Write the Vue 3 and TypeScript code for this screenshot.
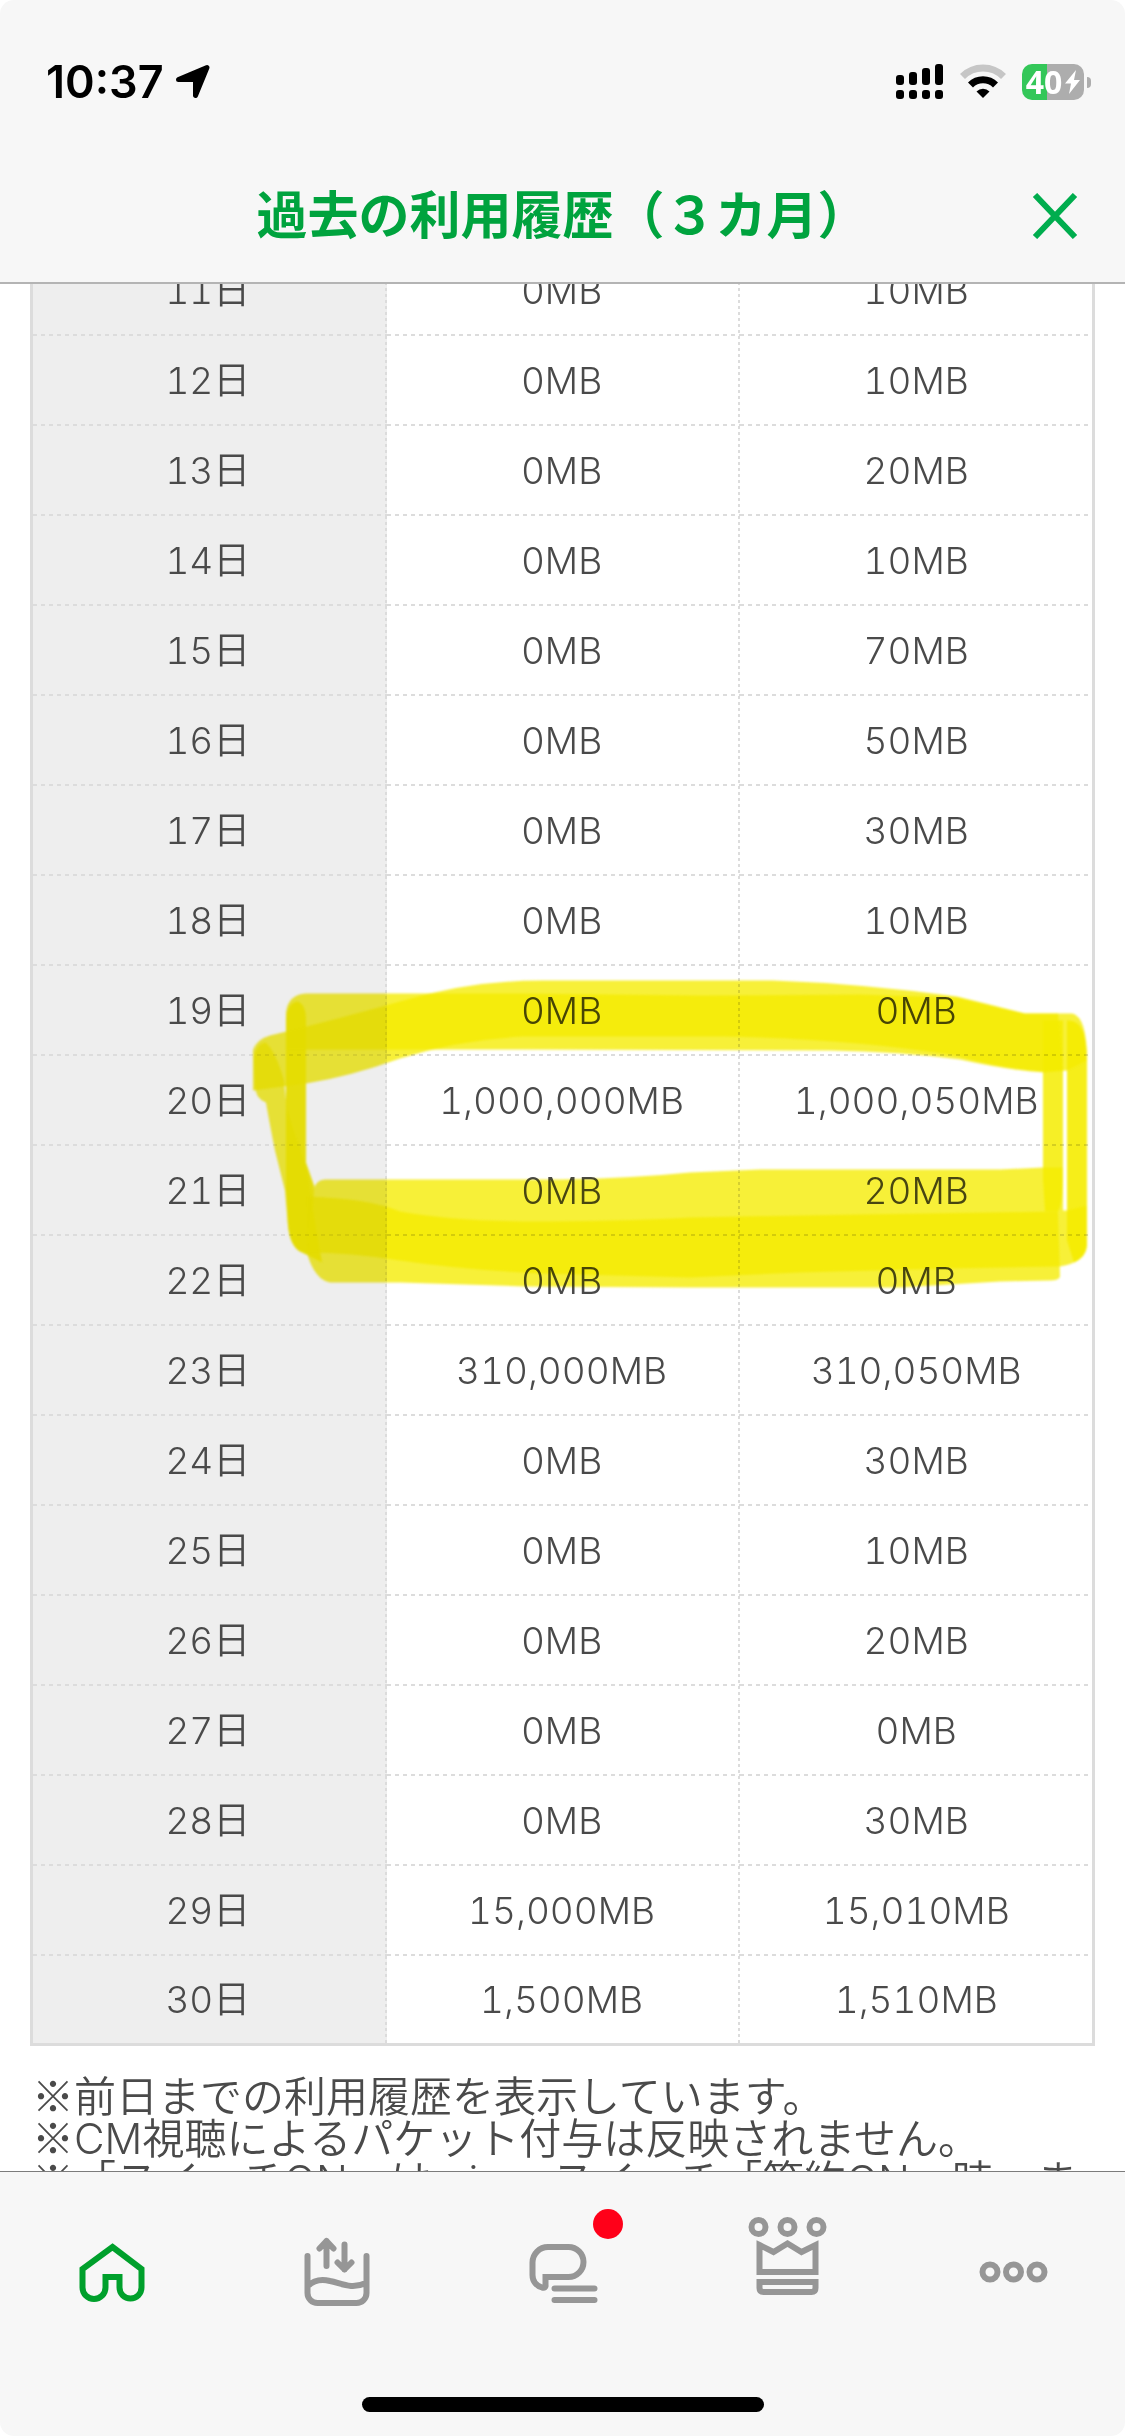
<script setup lang="ts">
import { onMounted, ref } from 'vue'

interface UsageRow {
  day: string
  granted: string
  used: string
}

const rows: UsageRow[] = [
  { day: '11日', granted: '0MB', used: '10MB' },
  { day: '12日', granted: '0MB', used: '10MB' },
  { day: '13日', granted: '0MB', used: '20MB' },
  { day: '14日', granted: '0MB', used: '10MB' },
  { day: '15日', granted: '0MB', used: '70MB' },
  { day: '16日', granted: '0MB', used: '50MB' },
  { day: '17日', granted: '0MB', used: '30MB' },
  { day: '18日', granted: '0MB', used: '10MB' },
  { day: '19日', granted: '0MB', used: '0MB' },
  { day: '20日', granted: '1,000,000MB', used: '1,000,050MB' },
  { day: '21日', granted: '0MB', used: '20MB' },
  { day: '22日', granted: '0MB', used: '0MB' },
  { day: '23日', granted: '310,000MB', used: '310,050MB' },
  { day: '24日', granted: '0MB', used: '30MB' },
  { day: '25日', granted: '0MB', used: '10MB' },
  { day: '26日', granted: '0MB', used: '20MB' },
  { day: '27日', granted: '0MB', used: '0MB' },
  { day: '28日', granted: '0MB', used: '30MB' },
  { day: '29日', granted: '15,000MB', used: '15,010MB' },
  { day: '30日', granted: '1,500MB', used: '1,510MB' },
]

const notes: string[] = [
  '前日までの利用履歴を表示しています。',
  'CM視聴によるパケット付与は反映されません。',
  '「スイッチON」はmineoスイッチ「節約ON」時、ま',
]

const scroller = ref<HTMLElement | null>(null)

// The list opens part-way through the row of the 11th.
onMounted(() => {
  if (scroller.value) scroller.value.scrollTop = 38
})
</script>

<template>
  <div class="screen">
    <div class="status">
      <div class="status-left">
        <span class="clock">10:37</span>
        <svg class="location" width="36" height="36" viewBox="0 0 36 36">
          <path d="M2.500 15.500 31 3.500 19.500 31.500V15.500Z" fill="#000" stroke="#000" stroke-width="5" stroke-linejoin="round" />
        </svg>
      </div>
      <div class="status-right">
        <svg width="48" height="36" viewBox="0 0 48 36">
          <rect x="0" y="11" width="8" height="10" rx="3" />
          <rect x="13" y="8" width="8" height="13" rx="3" />
          <rect x="26" y="4" width="8" height="17" rx="3" />
          <rect x="39" y="0" width="8" height="21" rx="3" />
          <rect x="0" y="26" width="8" height="9" rx="3" />
          <rect x="13" y="26" width="8" height="9" rx="3" />
          <rect x="26" y="26" width="8" height="9" rx="3" />
          <rect x="39" y="26" width="8" height="9" rx="3" />
        </svg>
        <svg width="46" height="36" viewBox="0 0 46 36" fill="none">
          <path d="M2.500 12.500A29 29 0 0 1 43.500 12.500" stroke="#c6c6c6" stroke-width="7" />
          <path d="M10.500 21A17.500 17.500 0 0 1 35.500 21" stroke="#000" stroke-width="7" />
          <path d="M23 34 16.500 27.500a9.200 9.200 0 0 1 13 0Z" fill="#000" />
        </svg>
        <div class="battery-wrap">
          <div class="battery">
            <span>40</span>
            <svg width="15" height="24" viewBox="0 0 15 24">
              <path d="M11 0 0 13.500h6L4 24 15 10H9Z" fill="#fff" />
            </svg>
          </div>
          <div class="battery-nub"></div>
        </div>
      </div>
    </div>

    <header class="header">
      <h1>過去の利用履歴（３カ月）</h1>
      <button class="close" type="button" aria-label="閉じる">
        <svg width="46" height="46" viewBox="0 0 46 46">
          <path d="M3 2 43 44M43 2 3 44" stroke="#00ad4e" stroke-width="6" />
        </svg>
      </button>
    </header>

    <main ref="scroller" class="content">
      <div class="history">
        <table>
          <tbody>
            <tr v-for="row in rows" :key="row.day">
              <th scope="row">{{ row.day }}</th>
              <td>{{ row.granted }}</td>
              <td>{{ row.used }}</td>
            </tr>
          </tbody>
        </table>
        <svg class="marker" viewBox="30 245 1065 1801" preserveAspectRatio="none" aria-hidden="true">
          <g fill="#f5ec00">
            <path opacity="0.78" d="M286 1012Q288 994 306 993H523L700 995 860 994 957 997Q1000 1008 1025 1013H1072Q1087 1016 1087 1060L1067 1070 1044 1072Q1010 1070 960 1059 900 1051 830 1050L520 1049H286Z" />
            <path opacity="0.78" d="M253 1050Q256 1039 270 1035 340 1018 400 1001 470 980 540 980H773Q860 983 957 996 990 1004 1025 1013H1058L1063 1070 1044 1071Q1000 1068 955 1055 850 1038 723 1036H523Q460 1039 400 1058 350 1076 306 1083L253 1090Z" />
            <path opacity="0.95" d="M286 1020Q287 1003 297 1001 306 1003 306 1020V1162L314 1185 313 1210 322 1262 300 1251Q290 1245 288 1225L286 1190Z" />
            <path opacity="0.78" d="M254 1055Q258 1042 266 1042 276 1052 284 1080L287 1110 306 1165 312 1200 318 1250 300 1251Q290 1245 288 1225L285 1190 275 1150Q269 1120 266 1102 255 1098 255 1085Z" />
            <path opacity="0.78" d="M313 1190Q316 1179 325 1179H560Q630 1178 690 1172L760 1169H1000L1043 1167H1063V1210H1067L1087 1205V1245Q1085 1262 1060 1266L950 1268 800 1272 690 1277 540 1273Q460 1269 400 1260 350 1252 306 1252Z" />
            <path opacity="0.78" d="M306 1196Q370 1198 400 1211 450 1220 523 1221 620 1221 690 1217L860 1214 1058 1211 1060 1276Q1059 1280 1050 1280L1000 1281 900 1287H690L523 1286 400 1282H330Q316 1280 308 1256Z" />
            <path opacity="0.85" d="M1043 1020H1063V1180Q1062 1205 1058 1211H1045L1043 1180Z" />
            <path opacity="0.9" d="M1067 1020Q1087 1018 1087 1060V1245Q1086 1257 1074 1262L1067 1240Z" />
          </g>
        </svg>
      </div>
      <div class="notes">
        <p v-for="note in notes" :key="note"><span class="mark">※</span>{{ note }}</p>
      </div>
    </main>

    <nav class="tabs" aria-label="メインメニュー">
      <div class="tab-row">
        <button class="tab active" type="button" aria-label="ホーム">
          <svg viewBox="0 0 90 100">
            <path stroke-width="6" d="M44.500 37 73.500 59V77.500a11 11 0 0 1-22 0V67h-14V77.500a11 11 0 0 1-23 0V59Z" />
          </svg>
        </button>
        <button class="tab" type="button" aria-label="データ">
          <svg viewBox="0 0 90 100" stroke-linecap="round" stroke-linejoin="round">
            <path stroke-width="6" d="M14.500 46V83a10 10 0 0 0 10 10H63.500a10 10 0 0 0 10-10V46M15 76C21 70 29 69 37 71 48 73 58 80 73 73M33.500 56V31M26.500 38.500l7-7.500 7 7.500M51.500 34.500V59.500M44.500 52.500l7 7 7-7" />
          </svg>
        </button>
        <button class="tab" type="button" aria-label="お知らせ">
          <svg viewBox="0 0 90 100" stroke-linecap="round">
            <path stroke-width="6" d="M27.500 67H50.500a15 15 0 0 0 0-30H30a15.500 15.500 0 0 0-15.500 15.500V65c0 7 4.500 11 9.500 12.500q4 1 3.500-2.500ZM36.500 78.500h40M36.500 90h40" />
          </svg>
          <span class="badge"></span>
        </button>
        <button class="tab" type="button" aria-label="特典">
          <svg viewBox="0 0 90 100">
            <g stroke-width="6">
              <circle cx="15.500" cy="17" r="7" />
              <circle cx="44.500" cy="17" r="7" />
              <circle cx="73.500" cy="17" r="7" />
              <path d="M16.500 35 30.500 42 44.500 33.500 58.500 42 72.500 35V62h-56ZM16.500 72h56v6q0 4-4 4h-48q-4 0-4-4Z" />
            </g>
          </svg>
        </button>
        <button class="tab" type="button" aria-label="その他">
          <svg viewBox="0 0 90 100">
            <g stroke-width="6">
              <circle cx="22" cy="62" r="7.500" />
              <circle cx="45.500" cy="62" r="7.500" />
              <circle cx="69" cy="62" r="7.500" />
            </g>
          </svg>
        </button>
      </div>
      <div class="home-bar"></div>
    </nav>
  </div>
</template>

<style>
body {
  margin: 0;
  background: #fff;
}
</style>

<style scoped>
.screen {
  display: flex;
  flex-direction: column;
  height: 100vh;
  overflow: hidden;
  border-radius: 14px;
  background: #fff;
  color: #4a4a4a;
  font-family: Inter, "Noto Sans CJK JP", sans-serif;
}

.status {
  display: flex;
  justify-content: space-between;
  align-items: center;
  box-sizing: border-box;
  height: 148px;
  padding: 16px 34px 0 46px;
  background: #f7f7f7;
}

.status-left {
  display: flex;
  align-items: center;
  gap: 12px;
}

.clock {
  color: #000;
  font-size: 45px;
  font-weight: 600;
  line-height: 54px;
}

.status-right {
  display: flex;
  align-items: center;
  gap: 16px;
}

.battery-wrap {
  display: flex;
  align-items: center;
  gap: 3px;
}

.battery {
  display: flex;
  align-items: center;
  justify-content: center;
  gap: 3px;
  width: 62px;
  height: 36px;
  border-radius: 10px;
  background: linear-gradient(to right, #34c759 40%, #adadad 40%);
}

.battery span {
  color: #fff;
  font-family: "Noto Sans", sans-serif;
  font-size: 32px;
  font-weight: 700;
  line-height: 36px;
}

.battery-nub {
  width: 4px;
  height: 11px;
  border-radius: 0 4px 4px 0;
  background: #adadad;
}

.header {
  position: relative;
  display: flex;
  justify-content: center;
  align-items: center;
  box-sizing: border-box;
  height: 136px;
  padding-bottom: 6px;
  border-bottom: 2px solid #b4b4b4;
  background: #f7f7f7;
}

h1 {
  margin: 0;
  color: #00a33e;
  font-family: "Noto Sans CJK JP", sans-serif;
  font-size: 51px;
  font-weight: 700;
  line-height: 64px;
}

.close {
  position: absolute;
  top: 45px;
  right: 47px;
  display: flex;
  padding: 0;
  border: 0;
  background: none;
}

.content {
  flex: 1;
  min-height: 0;
  overflow-y: auto;
  scrollbar-width: none;
}

.history {
  position: relative;
  margin: 0 30px;
}

table {
  width: 100%;
  table-layout: fixed;
  border: 3px solid #dcdcdc;
  border-top: 0;
  border-collapse: separate;
  border-spacing: 0;
  font-size: 37px;
  font-variant-numeric: tabular-nums;
  line-height: 48px;
}

th,
td {
  box-sizing: border-box;
  width: 33.4%;
  height: 90px;
  padding: 0 4px 0 0;
  font-weight: 350;
  text-align: center;
  background-image:
    repeating-linear-gradient(to right, #dcdcdc 0 4px, transparent 4px 8px),
    repeating-linear-gradient(to bottom, #dcdcdc 0 3px, transparent 3px 6px);
  background-position: left bottom, right top;
  background-repeat: no-repeat;
  background-size: 100% 2px, 2px 100%;
}

th {
  background-color: #eee;
}

td:last-child {
  width: 33.2%;
  padding: 0;
  background-size: 100% 2px, 0 0;
}

tr:last-child > * {
  height: 87px;
  background-size: 0 0, 2px 100%;
}

tr:last-child > td:last-child {
  background-size: 0 0;
}

.marker {
  position: absolute;
  top: 0;
  left: 0;
  width: 100%;
  height: 100%;
  mix-blend-mode: multiply;
  filter: blur(1px);
  pointer-events: none;
}

.notes {
  padding: 30px 32px;
  font-size: 42px;
  font-weight: 350;
  line-height: 42px;
  white-space: nowrap;
}

.notes p {
  margin: 0;
}

.mark {
  font-family: "Noto Sans CJK JP", sans-serif;
  line-height: 0;
}

.tabs {
  display: flex;
  flex-direction: column;
  align-items: center;
  justify-content: space-between;
  box-sizing: border-box;
  height: 265px;
  padding-bottom: 24px;
  border-top: 1px solid #7c7c7c;
  background: #f7f7f7;
}

.tab-row {
  display: flex;
  width: 100%;
}

.tab {
  position: relative;
  display: flex;
  flex: 1;
  justify-content: center;
  padding: 38px 0 20px;
  border: 0;
  background: none;
  color: #969696;
}

.tab.active {
  color: #00a02c;
}

.tab svg {
  width: 90px;
  height: 100px;
  fill: none;
  stroke: currentColor;
}

.badge {
  position: absolute;
  top: 37px;
  left: calc(50% + 30px);
  width: 30px;
  height: 30px;
  border-radius: 50%;
  background: #ff0019;
}

.home-bar {
  width: 402px;
  height: 15px;
  border-radius: 8px;
  background: #000;
}
</style>
